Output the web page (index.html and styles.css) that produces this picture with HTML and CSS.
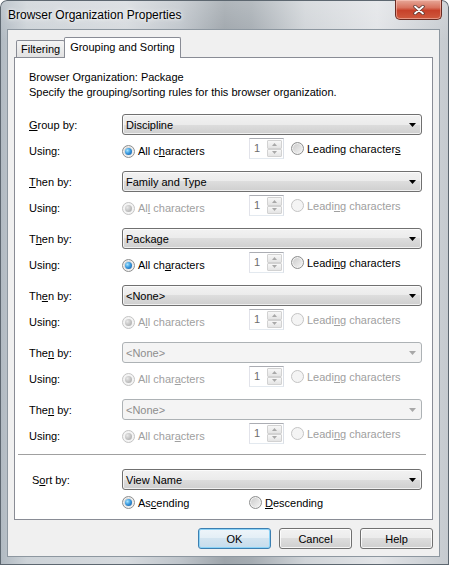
FILE: index.html
```html
<!DOCTYPE html>
<html lang="en">
<head>
  <title>Browser Organization Properties</title>
  <meta charset="utf-8">
  <link rel="stylesheet" href="styles.css">
</head>
<body>
  <div class="window">
    <div class="titlebar">
      <span class="title">Browser Organization Properties</span>
      <button class="close" aria-label="Close">
        <svg width="12" height="10" viewBox="0 0 12 10" aria-hidden="true">
          <path d="M2 1.5l8 7M10 1.5l-8 7" stroke="#5b3630" stroke-width="3.4" stroke-linecap="round"/>
          <path d="M2 1.5l8 7M10 1.5l-8 7" stroke="#ffffff" stroke-width="1.8" stroke-linecap="round"/>
        </svg>
      </button>
    </div>

    <div class="client">
      <div class="tabs">
        <div class="tab">Filtering</div>
        <div class="tab tab-active">Grouping and Sorting</div>
      </div>

      <div class="panel">
        <p class="intro">Browser Organization: Package<br>Specify the grouping/sorting rules for this browser organization.</p>

        <div class="groups">
          <div class="group">
            <div class="row">
              <span class="label"><u>G</u>roup by:</span>
              <div class="combo"><span>Discipline</span><svg class="combo-arrow" viewBox="0 0 7 4"><polygon points="0,0 7,0 3.5,4"/></svg></div>
            </div>
            <div class="row">
              <span class="label label-using">Using:</span>
              <label class="option option-all"><span class="radio radio-checked"></span><span>All c<u>h</u>aracters</span></label>
              <div class="spinner"><span class="spinner-value">1</span><span class="spin-buttons"><span class="spin"><svg viewBox="0 0 5 3"><polygon points="0,3 5,3 2.5,0"/></svg></span><span class="spin"><svg viewBox="0 0 5 3"><polygon points="0,0 5,0 2.5,3"/></svg></span></span></div>
              <label class="option option-leading"><span class="radio"></span><span>Leading character<u>s</u></span></label>
            </div>
          </div>

          <div class="group">
            <div class="row">
              <span class="label"><u>T</u>hen by:</span>
              <div class="combo"><span>Family and Type</span><svg class="combo-arrow" viewBox="0 0 7 4"><polygon points="0,0 7,0 3.5,4"/></svg></div>
            </div>
            <div class="row">
              <span class="label label-using">Using:</span>
              <label class="option option-all is-disabled"><span class="radio radio-checked radio-disabled"></span><span>Al<u>l</u> characters</span></label>
              <div class="spinner"><span class="spinner-value">1</span><span class="spin-buttons"><span class="spin"><svg viewBox="0 0 5 3"><polygon points="0,3 5,3 2.5,0"/></svg></span><span class="spin"><svg viewBox="0 0 5 3"><polygon points="0,0 5,0 2.5,3"/></svg></span></span></div>
              <label class="option option-leading is-disabled"><span class="radio radio-disabled"></span><span>Leadi<u>n</u>g characters</span></label>
            </div>
          </div>

          <div class="group">
            <div class="row">
              <span class="label">T<u>h</u>en by:</span>
              <div class="combo"><span>Package</span><svg class="combo-arrow" viewBox="0 0 7 4"><polygon points="0,0 7,0 3.5,4"/></svg></div>
            </div>
            <div class="row">
              <span class="label label-using">Using:</span>
              <label class="option option-all"><span class="radio radio-checked"></span><span>All ch<u>a</u>racters</span></label>
              <div class="spinner"><span class="spinner-value">1</span><span class="spin-buttons"><span class="spin"><svg viewBox="0 0 5 3"><polygon points="0,3 5,3 2.5,0"/></svg></span><span class="spin"><svg viewBox="0 0 5 3"><polygon points="0,0 5,0 2.5,3"/></svg></span></span></div>
              <label class="option option-leading"><span class="radio"></span><span>Leadi<u>n</u>g characters</span></label>
            </div>
          </div>

          <div class="group">
            <div class="row">
              <span class="label">Th<u>e</u>n by:</span>
              <div class="combo"><span>&lt;None&gt;</span><svg class="combo-arrow" viewBox="0 0 7 4"><polygon points="0,0 7,0 3.5,4"/></svg></div>
            </div>
            <div class="row">
              <span class="label label-using">Using:</span>
              <label class="option option-all is-disabled"><span class="radio radio-checked radio-disabled"></span><span>A<u>l</u>l characters</span></label>
              <div class="spinner"><span class="spinner-value">1</span><span class="spin-buttons"><span class="spin"><svg viewBox="0 0 5 3"><polygon points="0,3 5,3 2.5,0"/></svg></span><span class="spin"><svg viewBox="0 0 5 3"><polygon points="0,0 5,0 2.5,3"/></svg></span></span></div>
              <label class="option option-leading is-disabled"><span class="radio radio-disabled"></span><span>Leadi<u>n</u>g characters</span></label>
            </div>
          </div>

          <div class="group">
            <div class="row">
              <span class="label">The<u>n</u> by:</span>
              <div class="combo combo-disabled"><span>&lt;None&gt;</span><svg class="combo-arrow" viewBox="0 0 7 4"><polygon points="0,0 7,0 3.5,4"/></svg></div>
            </div>
            <div class="row">
              <span class="label label-using">Using:</span>
              <label class="option option-all is-disabled"><span class="radio radio-checked radio-disabled"></span><span>All char<u>a</u>cters</span></label>
              <div class="spinner"><span class="spinner-value">1</span><span class="spin-buttons"><span class="spin"><svg viewBox="0 0 5 3"><polygon points="0,3 5,3 2.5,0"/></svg></span><span class="spin"><svg viewBox="0 0 5 3"><polygon points="0,0 5,0 2.5,3"/></svg></span></span></div>
              <label class="option option-leading is-disabled"><span class="radio radio-disabled"></span><span>Leadi<u>n</u>g characters</span></label>
            </div>
          </div>

          <div class="group">
            <div class="row">
              <span class="label">The<u>n</u> by:</span>
              <div class="combo combo-disabled"><span>&lt;None&gt;</span><svg class="combo-arrow" viewBox="0 0 7 4"><polygon points="0,0 7,0 3.5,4"/></svg></div>
            </div>
            <div class="row">
              <span class="label label-using">Using:</span>
              <label class="option option-all is-disabled"><span class="radio radio-checked radio-disabled"></span><span>All char<u>a</u>cters</span></label>
              <div class="spinner"><span class="spinner-value">1</span><span class="spin-buttons"><span class="spin"><svg viewBox="0 0 5 3"><polygon points="0,3 5,3 2.5,0"/></svg></span><span class="spin"><svg viewBox="0 0 5 3"><polygon points="0,0 5,0 2.5,3"/></svg></span></span></div>
              <label class="option option-leading is-disabled"><span class="radio radio-disabled"></span><span>Leadi<u>n</u>g characters</span></label>
            </div>
          </div>
        </div>

        <hr class="separator">

        <div class="row">
          <span class="label label-sort">S<u>o</u>rt by:</span>
          <div class="combo"><span>View Name</span><svg class="combo-arrow" viewBox="0 0 7 4"><polygon points="0,0 7,0 3.5,4"/></svg></div>
        </div>
        <div class="sort-order">
          <label class="option option-all"><span class="radio radio-checked"></span><span>As<u>c</u>ending</span></label>
          <label class="option"><span class="radio"></span><span><u>D</u>escending</span></label>
        </div>
      </div>

      <div class="buttons">
        <button class="button button-default">OK</button>
        <button class="button">Cancel</button>
        <button class="button">Help</button>
      </div>
    </div>
  </div>
</body>
</html>
```

FILE: styles.css
```css
*, *::before, *::after {
  margin: 0;
  padding: 0;
  box-sizing: border-box;
}

html, body {
  width: 449px;
  height: 565px;
  overflow: hidden;
}

body {
  background-color: #FFFFFF;
  color: #000000;
  font-family: "Liberation Sans", Arial, sans-serif;
  font-size: 11px;
}

u {
  text-decoration-thickness: 1px;
  text-underline-offset: 1px;
}

/* aero frame */

.window {
  display: flex;
  flex-direction: column;
  width: 449px;
  height: 565px;
  padding: 0 9px 8px 7px;
  border-radius: 7px 7px 0 0;
  background:
    linear-gradient(180deg, rgba(255, 255, 255, 0.2), rgba(255, 255, 255, 0) 40px),
    linear-gradient(90deg, #b0b9c1 0, #cdd3d8 6%, #d6dade 28%, #bfc5cb 40%, #9ea5ab 50%, #a5acb2 56%, #d0d4d8 68%, #e2e4e7 84%, #c5cacf 100%);
  box-shadow: inset 0 0 0 1px #5d6770;
}

.titlebar {
  display: flex;
  justify-content: space-between;
  align-items: flex-start;
  height: 29px;
  margin-right: -2px;
}

.title {
  padding: 8px 0 0 1px;
  font-size: 12px;
  line-height: 15px;
  color: #000000;
  text-shadow: 0 0 6px rgba(255, 255, 255, 0.9), 0 0 3px rgba(255, 255, 255, 0.8);
}

.close {
  display: flex;
  align-items: center;
  justify-content: center;
  width: 47px;
  height: 20px;
  border: 1px solid #6a2b22;
  border-top: none;
  border-radius: 0 0 5px 5px;
  background: linear-gradient(180deg, #e7a899 0, #d8735f 40%, #c7412a 55%, #cf5a3e 100%);
  box-shadow: inset 0 0 0 1px rgba(255, 210, 200, 0.5);
}

.client {
  display: flex;
  flex-direction: column;
  flex: 1;
  padding: 7px 6px;
  border: 1px solid #8d97a0;
  background-color: #F0F0F0;
}

/* tabs */

.tabs {
  display: flex;
  align-items: flex-end;
  height: 20px;
  padding-left: 2px;
}

.tab {
  height: 17px;
  padding: 0 4px;
  border: 1px solid #898C95;
  border-bottom: none;
  border-radius: 2px 2px 0 0;
  background: linear-gradient(180deg, #F4F4F4, #E2E2E2);
  line-height: 17px;
}

.tab-active {
  position: relative;
  z-index: 1;
  height: 21px;
  margin-left: -1px;
  margin-bottom: -1px;
  padding: 0 5px;
  background: #FFFFFF;
  line-height: 19px;
}

.panel {
  display: flex;
  flex-direction: column;
  height: 463px;
  padding: 12px 10px 10px 14px;
  border: 1px solid #898C95;
  background-color: #FFFFFF;
}

.intro {
  margin-bottom: 14px;
  line-height: 15px;
}

.groups {
  display: flex;
  flex-direction: column;
  gap: 12px;
}

.group {
  display: flex;
  flex-direction: column;
  gap: 3px;
}

.row {
  display: flex;
  align-items: center;
  height: 21px;
}

.label {
  flex-shrink: 0;
  width: 93px;
}

.label-using {
  margin-top: 5px;
}

.label-sort {
  padding-left: 3px;
}

/* drop-down list */

.combo {
  display: flex;
  align-items: center;
  justify-content: space-between;
  width: 300px;
  height: 21px;
  padding: 0 5px 0 3px;
  border: 1px solid #707070;
  border-radius: 3px;
  background: linear-gradient(180deg, #F2F2F2 0, #EBEBEB 50%, #DDDDDD 50%, #CFCFCF 100%);
  box-shadow: inset 0 0 0 1px rgba(255, 255, 255, 0.7);
}

.combo-arrow {
  width: 7px;
  height: 4px;
  fill: #000000;
}

.combo-disabled {
  border-color: #ADB2B5;
  background: #F4F4F4;
  color: #8D8D8D;
  box-shadow: none;
}

.combo-disabled .combo-arrow {
  fill: #A8A8A8;
}

/* radio buttons */

.option {
  display: flex;
  align-items: center;
  gap: 3px;
}

.option-all {
  flex-shrink: 0;
  width: 127px;
  margin-top: 5px;
}

.option-leading {
  margin-left: 7px;
}

.is-disabled {
  color: #A0A0A0;
}

.radio {
  display: flex;
  align-items: center;
  justify-content: center;
  flex-shrink: 0;
  width: 13px;
  height: 13px;
  border: 1px solid #8E8F8F;
  border-radius: 50%;
  background: linear-gradient(135deg, #C9C9C9, #F6F6F6);
  box-shadow: inset 0 0 0 1px #F2F2F2;
}

.radio-checked::after {
  content: "";
  width: 7px;
  height: 7px;
  border-radius: 50%;
  background: radial-gradient(circle at 35% 35%, #A9E6FF 0, #3B9BE0 45%, #0D4F98 100%);
}

.radio-disabled {
  border-color: #C4C4C4;
  background: #F4F4F4;
  box-shadow: none;
}

.radio-disabled.radio-checked::after {
  background: radial-gradient(circle at 35% 35%, #E8E8E8 0, #BDBDBD 60%, #A9A9A9 100%);
}

/* numeric spinner */

.spinner {
  display: flex;
  flex-shrink: 0;
  width: 35px;
  height: 21px;
  border: 1px solid;
  border-color: #ABADB3 #DBDFE6 #E3E9EF #E2E3EA;
  background-color: #FFFFFF;
}

.spinner-value {
  flex: 1;
  padding-left: 4px;
  line-height: 19px;
  color: #6D6D6D;
}

.spin-buttons {
  display: flex;
  flex-direction: column;
  width: 16px;
  padding: 1px 1px 1px 0;
}

.spin {
  display: flex;
  align-items: center;
  justify-content: center;
  flex: 1;
  border: 1px solid #D2D2D2;
  border-radius: 1px;
  background: linear-gradient(180deg, #F7F7F7, #E4E4E4);
}

.spin svg {
  width: 5px;
  height: 3px;
  fill: #A8A8A8;
}

.separator {
  height: 0;
  margin: 10px -4px 14px -11px;
  border: none;
  border-top: 1px solid #A0A0A0;
}

.sort-order {
  display: flex;
  align-items: center;
  height: 13px;
  margin-top: 6px;
  padding-left: 93px;
}

.sort-order .option-all {
  margin-top: 0;
}

/* dialog buttons */

.buttons {
  display: flex;
  justify-content: flex-end;
  gap: 8px;
  margin-top: 8px;
}

.button {
  width: 73px;
  height: 21px;
  border: 1px solid #707070;
  border-radius: 3px;
  background: linear-gradient(180deg, #F2F2F2 0, #EBEBEB 50%, #DDDDDD 50%, #CFCFCF 100%);
  box-shadow: inset 0 0 0 1px rgba(255, 255, 255, 0.8);
  color: #000000;
  font-family: inherit;
  font-size: 11px;
}

.button-default {
  border-color: #3C7FB1;
  background: linear-gradient(180deg, #EEF5FA 0, #E3EEF6 50%, #D3E4F0 50%, #C6DCEC 100%);
  box-shadow: inset 0 0 0 1px #8CD3F7;
}
```
